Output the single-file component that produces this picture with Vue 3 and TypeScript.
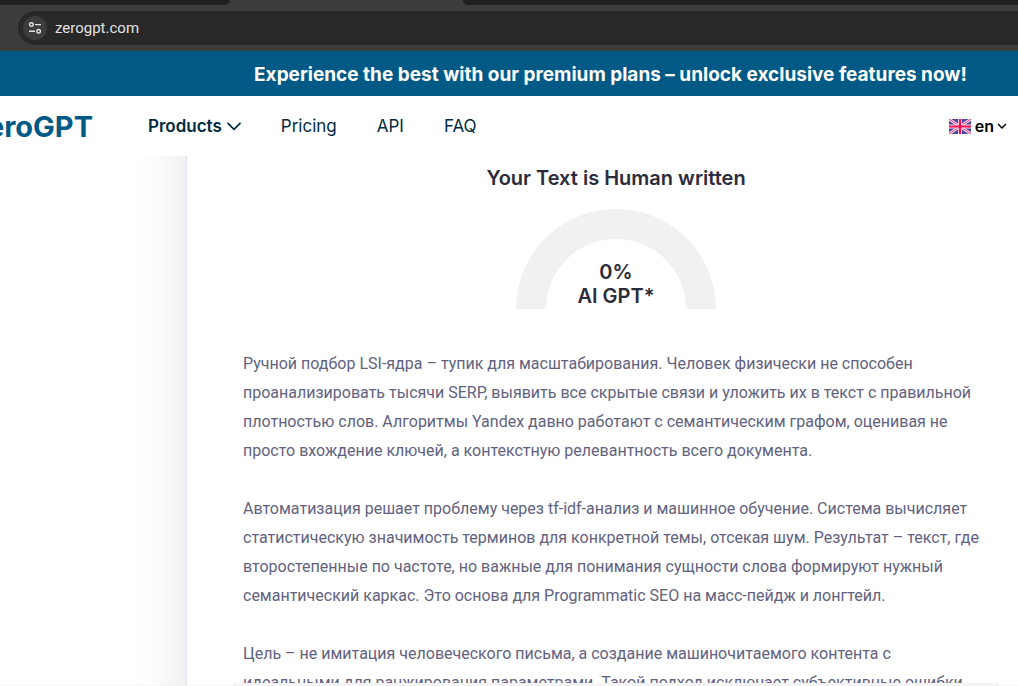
<script setup lang="ts">
interface NavLink {
  label: string
  href: string
}

const links: NavLink[] = [
  { label: 'Pricing', href: '#pricing' },
  { label: 'API', href: '#api' },
  { label: 'FAQ', href: '#faq' },
]

const paragraphs: string[][] = [
  [
    'Ручной подбор LSI-ядра – тупик для масштабирования. Человек физически не способен',
    'проанализировать тысячи SERP, выявить все скрытые связи и уложить их в текст с правильной',
    'плотностью слов. Алгоритмы Yandex давно работают с семантическим графом, оценивая не',
    'просто вхождение ключей, а контекстную релевантность всего документа.',
  ],
  [
    'Автоматизация решает проблему через tf-idf-анализ и машинное обучение. Система вычисляет',
    'статистическую значимость терминов для конкретной темы, отсекая шум. Результат – текст, где',
    'второстепенные по частоте, но важные для понимания сущности слова формируют нужный',
    'семантический каркас. Это основа для Programmatic SEO на масс-пейдж и лонгтейл.',
  ],
  [
    'Цель – не имитация человеческого письма, а создание машиночитаемого контента с',
    'идеальными для ранжирования параметрами. Такой подход исключает субъективные ошибки',
  ],
]
</script>

<template>
  <div class="screen">
    <header class="browser">
      <div class="tabs">
        <div class="tab-rest tab-left"></div>
        <div class="tab-rest tab-right"></div>
      </div>
      <div class="address">
        <button class="site-info" type="button" aria-label="Site information">
          <svg width="14" height="14" viewBox="0 0 14 14" fill="none" stroke="#e3e3e3" stroke-width="1.4">
            <circle cx="3.4" cy="3.6" r="1.8" />
            <path d="M7 3.6h6M1 10.3h6" />
            <circle cx="10.6" cy="10.3" r="1.8" />
          </svg>
        </button>
        <span class="url">zerogpt.com</span>
      </div>
    </header>

    <div class="banner">Experience the best with our premium plans – unlock exclusive features now!</div>

    <nav class="nav">
      <a class="logo" href="#home">ZeroGPT</a>
      <button class="products" type="button">
        Products
        <svg width="14" height="9" viewBox="0 0 14 9" fill="none" stroke="currentColor" stroke-width="1.7" stroke-linecap="round" stroke-linejoin="round">
          <path d="M1 1.3l6 6 6-6" />
        </svg>
      </button>
      <a v-for="link in links" :key="link.label" class="nav-link" :href="link.href">{{ link.label }}</a>
      <button class="language" type="button">
        <svg class="flag" width="22" height="15" viewBox="0 0 22 15">
          <rect width="22" height="15" rx="1" fill="#4a48a5" />
          <path d="M0 0l22 15M22 0L0 15" stroke="#f4dcec" stroke-width="2.8" />
          <path d="M0 0l22 15M22 0L0 15" stroke="#ff3d6e" stroke-width="1" />
          <path d="M11 0v15M0 7.5h22" stroke="#f8dcea" stroke-width="4" />
          <path d="M11 0v15M0 7.5h22" stroke="#fb0f4c" stroke-width="2.2" />
        </svg>
        <span>en</span>
        <svg width="10" height="7" viewBox="0 0 10 7" fill="none" stroke="currentColor" stroke-width="1.5">
          <path d="M1 1l4 4 4-4" />
        </svg>
      </button>
    </nav>

    <main class="content">
      <section class="card">
        <h1 class="title">Your Text is Human written</h1>
        <div class="gauge">
          <svg class="arc" width="200" height="100" viewBox="0 0 200 100">
            <path d="M15 100a85 85 0 0 1 170 0" fill="none" stroke="#f1f1f1" stroke-width="30" />
          </svg>
          <div class="score">0%<br />AI GPT*</div>
        </div>
        <p v-for="(lines, i) in paragraphs" :key="i" class="paragraph">
          <span v-for="line in lines" :key="line" class="line">{{ line }}</span>
        </p>
      </section>
    </main>
    <footer class="edge"><div class="edge-bar"></div></footer>
  </div>
</template>

<style>
body {
  margin: 0;
  overflow: hidden;
}
</style>

<style scoped>
.screen {
  display: flex;
  flex-direction: column;
  height: 100vh;
  overflow: hidden;
  background: #fff;
  font-family: Inter, "Liberation Sans", sans-serif;
}

.browser {
  flex: none;
  background: #3c3c3c;
  padding-bottom: 6px;
}

.tabs {
  display: flex;
  justify-content: space-between;
  height: 5px;
  margin-bottom: 6px;
}

.tab-rest {
  background: #1f2120;
}

.tab-left {
  width: 230px;
  border-bottom-right-radius: 8px;
}

.tab-right {
  width: calc(100% - 463px);
  border-bottom-left-radius: 8px;
}

.address {
  display: flex;
  align-items: center;
  gap: 8px;
  height: 34px;
  margin-left: 18px;
  padding-left: 5px;
  border-radius: 17px 0 0 17px;
  background: #282828;
}

.site-info {
  display: grid;
  place-items: center;
  width: 24px;
  height: 24px;
  padding: 0;
  border: 0;
  border-radius: 50%;
  background: #3c3c3c;
}

.url {
  color: #e3e3e3;
  font: 15px/20px Roboto, sans-serif;
}

.banner {
  flex: none;
  padding: 2px 0 0 203px;
  background: #015a86;
  color: #fff;
  font-size: 19px;
  font-weight: 700;
  line-height: 43px;
  text-align: center;
  white-space: nowrap;
}

.nav {
  display: flex;
  flex: none;
  align-items: center;
  height: 60px;
  padding-right: 11px;
  color: #022b40;
  font-size: 17px;
}

.nav a {
  color: inherit;
  text-decoration: none;
}

.nav button {
  display: flex;
  align-items: center;
  padding: 0;
  border: 0;
  background: none;
  color: inherit;
  font: inherit;
  font-weight: 600;
}

.nav .logo {
  display: flex;
  justify-content: flex-end;
  width: 93px;
  margin-right: 55px;
  overflow: hidden;
  color: #015a86;
  font-size: 29px;
  font-weight: 700;
}

.nav .products {
  gap: 5px;
}

.nav-link {
  margin-left: 40px;
}

.nav .language {
  gap: 4px;
  margin-left: auto;
  color: #000;
  font-size: 16px;
}

.language span {
  margin-right: -1px;
}

.content {
  flex: 1;
  min-height: 0;
  padding-left: 136px;
  overflow: hidden;
  background: linear-gradient(to right, #fff 136px, #fafafa 162px, #f0f0f3 186px, #fff 187px);
}

.card {
  box-sizing: border-box;
  margin: 0 -27px 0 50px;
  min-height: 100%;
  padding: 8px 56px 0;
  border-left: 1px solid #e4e3f6;
  background: #fff;
}

.title {
  margin: 0 0 17px;
  color: #2b2b3b;
  font-size: 20px;
  font-weight: 600;
  line-height: 28px;
  text-align: center;
}

.gauge {
  display: grid;
  justify-items: center;
  margin-bottom: 40px;
}

.arc,
.score {
  grid-area: 1 / 1;
}

.score {
  align-self: end;
  padding-bottom: 1px;
  color: #2b2b3b;
  font-size: 20px;
  font-weight: 600;
  line-height: 24px;
  text-align: center;
}

.paragraph {
  margin: 0 0 29px;
  color: #62627f;
  font-family: Roboto, sans-serif;
  font-size: 16px;
  line-height: 29px;
}

.line {
  display: block;
  white-space: nowrap;
}

.edge {
  flex: none;
  height: 3px;
  margin-top: -2px;
  padding: 0 19px 0 233px;
  background: linear-gradient(to bottom, transparent 2px, #f5f5f5 2px);
}

.edge-bar {
  height: 3px;
  background: #f5f4f4;
}
</style>
